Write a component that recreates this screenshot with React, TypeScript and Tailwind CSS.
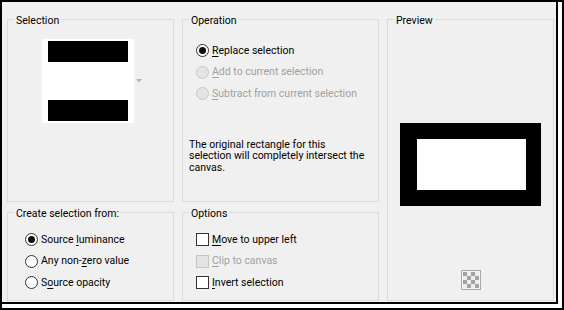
import type { ReactNode } from "react";

function Radio({ checked, disabled }: { checked?: boolean; disabled?: boolean }) {
  return (
    <span
      className={`w-[13px] h-[13px] rounded-full border flex items-center justify-center shrink-0 ${
        disabled ? "border-[#c8c8c8] bg-[#e4e4e4]" : "border-[#333333] bg-white"
      }`}
    >
      {checked && <span className="w-[7px] h-[7px] rounded-full bg-[#111]" />}
    </span>
  );
}

function Check({ disabled }: { disabled?: boolean }) {
  return (
    <span
      className={`w-[13px] h-[13px] border shrink-0 ${
        disabled ? "border-[#c4c4c4] bg-[#e4e4e4]" : "border-[#333333] bg-white"
      }`}
    />
  );
}

function Row({ control, disabled, children }: { control: ReactNode; disabled?: boolean; children: ReactNode }) {
  return (
    <div className={`h-[21.5px] flex items-center gap-[3px] ${disabled ? "text-[#a0a0a0]" : "text-black"}`}>
      {control}
      <span className="leading-none whitespace-nowrap">{children}</span>
    </div>
  );
}

const U = ({ children }: { children: ReactNode }) => (
  <span className="underline underline-offset-[2px] decoration-1">{children}</span>
);

// group box: legend padded on top so the text sits a little below the frame line
function Group({ title, className, children }: { title: string; className: string; children?: ReactNode }) {
  return (
    <fieldset className={`border border-[#dadada] ${className}`}>
      <legend className="ml-[6px] px-[2px] pt-[4px] leading-[14px]">{title}</legend>
      {children}
    </fieldset>
  );
}

export default function App() {
  const checker = Array.from({ length: 16 }, (_, i) => (Math.floor(i / 4) + (i % 4)) % 2 === 0);

  return (
    <div className="w-[564px] h-[310px] border-2 border-black bg-white font-['Roboto',sans-serif] text-[10.5px] text-black">
      <div className="w-[556px] h-[302px] border-r-2 border-b-2 border-black bg-[#f0f0f0] flex gap-[8px] pl-[5px] pt-[8px]">
        {/* left column */}
        <div className="w-[167px] flex flex-col gap-[1px]">
          <Group title="Selection" className="h-[192px]">
            <div className="flex items-center mt-[11px] ml-[34px]">
              <div className="w-[92px] h-[84px] bg-white px-[6px] py-[2px] flex flex-col justify-between">
                <div className="h-[21px] bg-black" />
                <div className="h-[21px] bg-black" />
              </div>
              <svg width="6" height="4" viewBox="0 0 6 4" className="ml-[2px]">
                <polygon points="0,0 6,0 3,3.5" fill="#b4b4b4" />
              </svg>
            </div>
          </Group>
          <Group title="Create selection from:" className="h-[98px]">
            <div className="pt-[8px] pl-[17px]">
              <Row control={<Radio checked />}>
                Source <U>l</U>uminance
              </Row>
              <Row control={<Radio />}>
                Any non-<U>z</U>ero value
              </Row>
              <Row control={<Radio />}>
                S<U>o</U>urce opacity
              </Row>
            </div>
          </Group>
        </div>

        {/* middle column */}
        <div className="w-[197px] flex flex-col gap-[1px]">
          <Group title="Operation" className="h-[192px]">
            <div className="pt-[12px] pl-[13px]">
              <Row control={<Radio checked />}>
                <U>R</U>eplace selection
              </Row>
              <Row control={<Radio disabled />} disabled>
                <U>A</U>dd to current selection
              </Row>
              <Row control={<Radio disabled />} disabled>
                <U>S</U>ubtract from current selection
              </Row>
            </div>
            <p className="mt-[34px] pl-[6px] leading-[11.5px] whitespace-nowrap">
              The original rectangle for this
              <br />
              selection will completely intersect the
              <br />
              canvas.
            </p>
          </Group>
          <Group title="Options" className="h-[98px]">
            <div className="pt-[8px] pl-[13px]">
              <Row control={<Check />}>
                <U>M</U>ove to upper left
              </Row>
              <Row control={<Check disabled />} disabled>
                <U>C</U>lip to canvas
              </Row>
              <Row control={<Check />}>
                <U>I</U>nvert selection
              </Row>
            </div>
          </Group>
        </div>

        {/* preview */}
        <Group title="Preview" className="w-[167px] h-[291px]">
          <div className="flex flex-col items-center">
            <div className="mt-[95px] w-[141px] h-[83px] bg-black pt-[16px] pl-[17px]">
              <div className="w-[109px] h-[51px] bg-white" />
            </div>
            <div className="mt-[64px] w-[20px] h-[20px] border border-[#a8a8a8] bg-[#f2f2f2] p-[1px] grid grid-cols-4">
              {checker.map((dark, i) => (
                <span key={i} className={`w-[4px] h-[4px] ${dark ? "bg-[#a2a2a2]" : "bg-[#ececec]"}`} />
              ))}
            </div>
          </div>
        </Group>
      </div>
    </div>
  );
}
